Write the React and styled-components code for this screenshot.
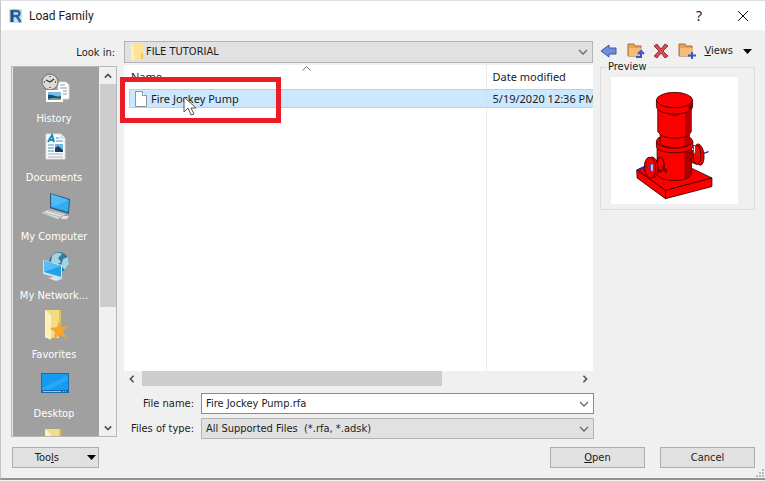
import React from "react";
import styled, { createGlobalStyle } from "styled-components";

const GlobalStyle = createGlobalStyle`
  * { box-sizing: border-box; }
  body { margin: 0; background: #f0f0f0; color: #1c1c1c; font: 11px/14px "DejaVu Sans Condensed", "DejaVu Sans", sans-serif; }
  button, input, select { font: inherit; color: inherit; margin: 0; }
`;

const Dialog = styled.div`
  border-top: 1px solid #dedede;
  border-left: 1px solid #c4c4c4;
  border-bottom: 2px solid #929292;
`;

const TitleBar = styled.header`
  display: flex;
  align-items: center;
  height: 29px;
  padding: 0 6px 0 7px;
  background: #fff;
`;

const Title = styled.h1`
  flex: 1;
  margin: 0 0 0 5px;
  font: 12px/16px Roboto, sans-serif;
`;

const TitleButton = styled.button`
  display: grid;
  place-items: center;
  width: 32px;
  height: 26px;
  margin-left: 12px;
  padding: 0;
  border: 0;
  background: none;
  font: 14px/16px "Noto Sans", sans-serif;
`;

const Body = styled.main`
  display: grid;
  grid-template-columns: 106px minmax(0, 1fr) 155px;
  column-gap: 7px;
  padding: 11px 10px 0 10px;
`;

const Column = styled.div`
  display: flex;
  flex-direction: column;
  min-width: 0;
`;

const LookLabel = styled.label`
  height: 25px;
  padding: 5px 2px 0 0;
  text-align: right;
`;

const Places = styled.nav`
  display: flex;
  height: 371px;
  border: 1px solid #fff;
  border-top-color: #8c8c8c;
  border-left-color: #8c8c8c;
  outline: 1px solid #b8b8b8;
  outline-offset: -1px;
`;

const PlaceList = styled.div`
  flex: 1;
  min-width: 0;
  overflow: hidden;
  border-left: 1px solid #e8e8e8;
  background: #a0a0a0;
`;

const Place = styled.button`
  display: flex;
  flex-direction: column;
  align-items: center;
  gap: 7px;
  width: 100%;
  height: 59px;
  padding: 6px 4px 0 0;
  border: 0;
  background: none;
  color: #fff;
  white-space: nowrap;
  svg { display: block; width: 32px; height: 32px; flex: none; }
`;

const VScroll = styled.div`
  display: flex;
  flex-direction: column;
  width: 17px;
  padding-left: 1px;
  background: #f0f0f0;
`;

const ScrollButton = styled.button`
  display: grid;
  place-items: center;
  flex: none;
  width: 16px;
  height: ${(p) => (p.$row ? 15 : 17)}px;
  padding: 0;
  border: 0;
  background: #f0f0f0;
`;

const VThumb = styled.div`
  height: 223px;
  margin-bottom: auto;
  background: #cdcdcd;
`;

const HScroll = styled.div`
  display: flex;
  background: #f0f0f0;
`;

const HThumb = styled.div`
  width: 64%;
  margin: 0 auto 0 2px;
  background: #cdcdcd;
`;

const Combo = styled.div`
  display: flex;
  align-items: center;
  flex: ${(p) => (p.$tall ? "none" : 1)};
  min-width: 0;
  height: ${(p) => (p.$tall ? 22 : 21)}px;
  padding: 0 4px;
  border: 1px solid ${(p) => (p.$editable ? "#8a8a8a" : "#b4b4b4")};
  background: ${(p) => (p.$editable ? "#fff" : "#e1e1e1")};
  svg { flex: none; }
`;

const comboField = `
  flex: 1;
  min-width: 0;
  height: 18px;
  padding: 0;
  border: 0;
  outline: 0;
  background: none;
  appearance: none;
`;
const Select = styled.select`${comboField}`;
const Input = styled.input`${comboField}`;

const DropButton = styled.button`
  display: grid;
  place-items: center;
  width: 10px;
  height: 16px;
  padding: 0;
  border: 0;
  background: none;
`;

const FilePane = styled.div`
  position: relative;
  height: 306px;
  margin-top: 2px;
  padding-left: 5px;
  background: #fff;
`;

const FileClip = styled.div`
  height: 100%;
  overflow: hidden;
`;

const FileTable = styled.table`
  width: 100%;
  height: 100%;
  table-layout: fixed;
  border-collapse: collapse;
  font: 11px/16px "Noto Sans", sans-serif;
  col:last-child { width: 107px; }
  th, td { padding: 0 0 0 6px; white-space: nowrap; text-align: left; font-weight: 400; }
  th { height: 24px; padding-left: 2px; }
  tr > :last-child { border-left: 1px solid #ececec; padding-left: 6px; }
`;

const FileRow = styled.tr`
  height: 19px;
  background: #cce8ff;
  box-shadow: inset 0 1px #a5d6fb, inset 0 -1px #a5d6fb, inset 1px 0 #a5d6fb;
  td:last-child { border-left-color: #c2e0f8; }
`;

const FileName = styled.span`
  display: flex;
  align-items: center;
  gap: 4px;
`;

const SortMark = styled.svg`
  position: absolute;
  top: 1px;
  left: 178px;
`;

const Highlight = styled.div`
  position: absolute;
  top: 12px;
  left: -4px;
  width: 161px;
  height: 46px;
  border: 5px solid #ec1c24;
`;

const Pointer = styled.svg`
  position: absolute;
  top: 31px;
  left: 59px;
`;

const Field = styled.div`
  display: flex;
  align-items: center;
  margin-top: ${(p) => (p.$first ? 7 : 4)}px;
  margin-right: -1px;
  label { width: 70px; margin-right: 7px; text-align: right; }
`;

const Toolbar = styled.div`
  display: flex;
  align-items: center;
  justify-content: space-between;
  height: 20px;
  padding-right: 3px;
`;

const ToolButton = styled.button`
  display: flex;
  align-items: center;
  gap: 10px;
  padding: 0;
  border: 0;
  background: none;
`;

const Preview = styled.fieldset`
  min-width: 0;
  height: 149px;
  margin: 0;
  padding: 4px 0 0 10px;
  border: 1px solid #dcdcdc;
  legend { margin-left: -5px; padding: 0 2px; line-height: 12px; }
  svg { display: block; background: #fff; }
`;

const Footer = styled.footer`
  display: flex;
  gap: 15px;
  padding: 8px 10px 10px 11px;
`;

const PushButton = styled.button`
  display: flex;
  align-items: center;
  justify-content: center;
  width: ${(p) => (p.$menu ? 87 : 95)}px;
  height: 21px;
  padding: 0;
  border: 1px solid #adadad;
  background: #e1e1e1;
  gap: 28px;
  ${(p) => p.$menu && "margin-right: auto; justify-content: flex-end; padding-right: 2px;"}
`;

const Resize = styled.svg`
  position: absolute;
  right: 0;
  bottom: 0;
`;

const FooterWrap = styled.div`
  position: relative;
`;

function Chevron({ dir = "down", color = "#505050", w = 2, size = 8 }) {
  const d = { down: "M1 3 5 7 9 3", up: "M1 7 5 3 9 7", left: "M7 1 3 5 7 9", right: "M3 1 7 5 3 9" }[dir];
  return (
    <svg width={size} height={size} viewBox="0 0 10 10" fill="none" stroke={color} strokeWidth={w} aria-hidden="true"><path d={d} /></svg>
  );
}

const ComboChevron = () => <Chevron w={1.3} size={10} color="#666" />;

const Triangle = () => (
  <svg width="9" height="5" viewBox="0 0 9 5" aria-hidden="true"><path d="M0 0h9L4.5 5z" fill="#000" /></svg>
);

const FolderShape = () => (
  <>
    <path d="M5 1h14v28H5z" fill="#f4dc85" />
    <path d="M5 1l6 5v25l-6-3z" fill="#fff0b5" />
    <path d="M19 1h2v16h-2z" fill="#e1c15b" />
  </>
);

const HistoryIcon = () => (
  <svg viewBox="0 0 32 32">
    <path d="M20 9h8l3 3v14H20z" fill="#fff" stroke="#d5dadd" />
    <path d="M22 12h5M22 15h7M22 18h7M22 21h7" stroke="#8b9aa3" />
    <circle cx="12" cy="9" r="8" fill="#dcdcd4" stroke="#80807a" strokeWidth="1.3" />
    <path d="M12 3v1M12 14v1M6 9h1M17 9h1M8 7l4 2 4-3" stroke="#333" strokeWidth="1.3" fill="none" />
    <path d="M8 17h17v12H8z" fill="#fff" />
    <path d="M10 19h13v8H10z" fill="#79bce8" />
    <path d="M10 22c5-1 8 3 13 1v4H10z" fill="#174a78" />
    <path d="M10 26c5-2 9 0 13-1v2H10z" fill="#68a875" />
  </svg>
);

const DocumentIcon = () => (
  <svg viewBox="0 0 32 32">
    <path d="M8 2h15l4 4v21H8z" fill="#fafcfc" stroke="#d8dee2" />
    <path d="M22 2v5h5" fill="#ddd" />
    <path d="M10 10l4-7 2 7M11 8h5" fill="none" stroke="#2488bd" strokeWidth="2" />
    <path d="M18 6h3M18 9h7M10 13h6M10 16h6M10 19h6" stroke="#4196c5" />
    <path d="M10 22h15M10 25h15" stroke="#a6adb1" />
    <path d="M17 12h8v8h-8z" fill="#74b6dd" /><path d="M17 16l3-2 5 4v2h-8z" fill="#153e62" />
  </svg>
);

const ComputerIcon = () => (
  <svg viewBox="0 0 32 32">
    <path d="M19 20l4 1v5h-5z" fill="#8aa1af" />
    <path d="M12 2l20 6-1 15-19-6z" fill="#315a78" />
    <path d="M13 3l18 6-1 12-17-5z" fill="#31acf5" /><path d="M13 3l18 6-17 7z" fill="#67c5fa" opacity=".6" />
    <path d="M4 22l6-3 17 4-7 5z" fill="#e2e5e8" stroke="#babdc0" /><path d="M7 22l15 4M10 20l14 4" stroke="#b2b8bd" />
    <path d="M25 25h6l-2 3h-6z" fill="#dfe2e4" />
  </svg>
);

const NetworkIcon = () => (
  <svg viewBox="0 0 32 32">
    <circle cx="21" cy="12" r="10" fill="#337b9e" />
    <path d="M14 6c4-5 8-3 10-2l-4 4 3 4-5 3-5-3zM25 9l5-2 1 7-4 6-4-4z" fill="#a5d4df" />
    <path d="M5 10l19 5v14L5 24z" fill="#d1e1e8" />
    <path d="M6 11l17 5v11L6 22z" fill="#249fea" /><path d="M6 11l17 5L6 22z" fill="#55bdfa" />
    <path d="M15 26l5 1v3l-5-1zM10 28l6-1 8 2-6 2z" fill="#dce4e8" />
  </svg>
);

const FavoriteIcon = () => (
  <svg viewBox="0 0 32 32">
    <g transform="translate(2)"><FolderShape /></g>
    <path d="M21 12l2 6 7-1-5 5 3 7-6-3-6 4 1-7-5-4 7-1z" fill="#f5a72c" />
  </svg>
);

const DesktopIcon = () => (
  <svg viewBox="0 0 32 32">
    <path d="M3 5h28v20H3z" fill="#176bab" /><path d="M4 6h26v16H4z" fill="#159bf2" />
    <path d="M4 20L30 7v5L10 22H4z" fill="#40b2fa" opacity=".5" />
    <path d="M5 23.5h18M25 23.5h1M27 23.5h1" stroke="#86c9ef" />
  </svg>
);

const FolderIcon = () => <svg viewBox="0 0 32 32"><g transform="translate(2 1)"><FolderShape /></g></svg>;

const places = [
  ["History", HistoryIcon], ["Documents", DocumentIcon], ["My Computer", ComputerIcon],
  ["My Network...", NetworkIcon], ["Favorites", FavoriteIcon], ["Desktop", DesktopIcon],
];

const ToolbarFolder = ({ children }) => (
  <svg width="18" height="18" viewBox="0 0 18 18" aria-hidden="true">
    <path d="M1 14V2h6l1 2h6v10z" fill="#e7a353" stroke="#a36f40" />
    <path d="M2 14V6h13v8z" fill="#f5bd76" />
    {children}
  </svg>
);

const PumpDrawing = () => (
  <svg width="127" height="127" viewBox="35 22 380 380" role="img" aria-label="Fire jockey pump">
    <g fill="#fc0000" stroke="#310000" strokeWidth="2.5" strokeLinejoin="round">
      <path d="M112 300L200 259 337 324V350L198 386 113 324z" />
      <path d="M113 300L198 361 337 324M198 361V386" fill="none" stroke="#180000" />
      <path d="M270 247l18-10v45l-18-7z" />
      <ellipse cx="299" cy="254" rx="14" ry="32" transform="rotate(-7 299 254)" />
      <ellipse cx="292" cy="255" rx="12" ry="29" />
      <path d="M173 224V310c2 29 101 29 103 0V224z" />
      <path d="M255 244h21v72c-6 6-13 9-21 11z" fill="#a90000" stroke="none" />
      <path d="M171 214v16c4 25 106 25 109 0v-16z" />
      <ellipse cx="225" cy="214" rx="54" ry="21" />
      <path d="M182 185v35c8 18 81 18 87 0v-35z" />
      <path d="M255 197h14v24c-4 5-9 7-14 8z" fill="#bd0000" stroke="none" />
      <path d="M175 112v74l8 8c10 15 76 15 86 0l6-8v-74z" />
      <path d="M257 126h18v60l-6 8-12 6z" fill="#bd0000" stroke="none" />
      <path d="M171 91v20c5 29 105 29 108 0V91z" />
      <path d="M267 108l11-7v12l-11 9z" fill="#8e0000" stroke="none" />
      <ellipse cx="225" cy="91" rx="54" ry="23" />
      <path d="M210 131c3 8 27 8 31 0" fill="none" />
      <path d="M166 280l14-15c18 3 20 36 5 42l-19-9z" />
      <ellipse cx="183" cy="282" rx="10" ry="20" />
      <ellipse cx="160" cy="292" rx="16" ry="31" transform="rotate(-6 160 292)" />
      <ellipse cx="152" cy="293" rx="17" ry="31" transform="rotate(-5 152 293)" />
      <path d="M188 290l12 17M200 295v12" />
    </g>
    <path d="M115 301l30-10M310 251l17-6" stroke="#2727bd" strokeWidth="4" />
    <path d="M154 282h7v22h-7zM282 227h6v23h-6z" fill="#fff" stroke="#4b3fae" strokeWidth="3" />
    <path d="M145 292h5M294 255h8" stroke="#3b6a26" strokeWidth="4" />
  </svg>
);

export default function App() {
  return (
    <>
      <GlobalStyle />
      <Dialog role="dialog" aria-labelledby="title">
        <TitleBar>
          <svg width="16" height="16" viewBox="0 0 16 16" aria-hidden="true">
            <path d="M1 1h13v14H1z" fill="#c8dcf0" />
            <path d="M4 2v12" stroke="#1c4f85" strokeWidth="3" />
            <path d="M5 3h3.5c4 0 4 5 0 5H5M8.5 8l4 6" fill="none" stroke="#2a62a0" strokeWidth="2.3" />
          </svg>
          <Title id="title">Load Family</Title>
          <TitleButton aria-label="Help">?</TitleButton>
          <TitleButton aria-label="Close">
            <svg width="12" height="12" viewBox="0 0 12 12" stroke="#111" aria-hidden="true"><path d="M1 1l10 10M11 1L1 11" /></svg>
          </TitleButton>
        </TitleBar>

        <Body>
          <Column>
            <LookLabel htmlFor="look-in">Look in:</LookLabel>
            <Places aria-label="Places">
              <PlaceList>
                {places.map(([label, Icon]) => <Place key={label}><Icon />{label}</Place>)}
                <Place aria-label="Folder"><FolderIcon /></Place>
              </PlaceList>
              <VScroll>
                <ScrollButton aria-label="Scroll up"><Chevron dir="up" /></ScrollButton>
                <VThumb />
                <ScrollButton aria-label="Scroll down"><Chevron /></ScrollButton>
              </VScroll>
            </Places>
          </Column>

          <Column>
            <Combo $tall>
              <svg width="17" height="18" viewBox="0 0 17 18" aria-hidden="true">
                <path d="M2 1h12v15H2z" fill="#ffe391" /><path d="M2 1l3 2v14l-3-1z" fill="#fff0b5" /><path d="M12 10h2v6h-2z" fill="#eec75e" />
              </svg>
              <Select id="look-in"><option>FILE TUTORIAL</option></Select>
              <ComboChevron />
            </Combo>
            <FilePane>
              <FileClip>
                <FileTable>
                  <colgroup><col /><col /></colgroup>
                  <thead><tr><th scope="col">Name</th><th scope="col">Date modified</th></tr></thead>
                  <tbody>
                    <FileRow>
                      <td>
                        <FileName>
                          <svg width="12" height="16" viewBox="0 0 12 16" fill="#fff" stroke="#8c969d" aria-hidden="true"><path d="M.5.5h7l4 4v11H.5z" /><path d="M7.5.5v4h4" /></svg>
                          Fire Jockey Pump
                        </FileName>
                      </td>
                      <td>5/19/2020 12:36 PM</td>
                    </FileRow>
                    <tr><td /><td /></tr>
                  </tbody>
                </FileTable>
              </FileClip>
              <SortMark width="9" height="5" viewBox="0 0 9 5" fill="none" stroke="#777" aria-hidden="true"><path d="M.5 4.5l4-4 4 4" /></SortMark>
              <Highlight />
              <Pointer width="14" height="20" viewBox="0 0 14 20" aria-hidden="true">
                <path d="M1 1v15l4-4 3 7 3-1-3-6h5z" fill="#fff" stroke="#555" />
              </Pointer>
            </FilePane>
            <HScroll>
              <ScrollButton $row aria-label="Scroll left"><Chevron dir="left" /></ScrollButton>
              <HThumb />
              <ScrollButton $row aria-label="Scroll right"><Chevron dir="right" /></ScrollButton>
            </HScroll>
            <Field $first>
              <label htmlFor="file-name">File name:</label>
              <Combo $editable>
                <Input id="file-name" defaultValue="Fire Jockey Pump.rfa" />
                <DropButton aria-label="Recent names"><ComboChevron /></DropButton>
              </Combo>
            </Field>
            <Field>
              <label htmlFor="file-type">Files of type:</label>
              <Combo>
                <Select id="file-type"><option>All Supported Files {"\u00a0"}(*.rfa, *.adsk)</option></Select>
                <ComboChevron />
              </Combo>
            </Field>
          </Column>

          <Column>
            <Toolbar>
              <ToolButton aria-label="Back">
                <svg width="18" height="16" viewBox="0 0 18 16" aria-hidden="true"><path d="M1 8l8-6v3h7v6H9v3z" fill="#6e8fdf" stroke="#4055a0" /></svg>
              </ToolButton>
              <ToolButton aria-label="Up one level">
                <ToolbarFolder><path d="M9 15h5v-4M11 12l3-3 3 3" fill="none" stroke="#345bc3" strokeWidth="2" /></ToolbarFolder>
              </ToolButton>
              <ToolButton aria-label="Delete">
                <svg width="16" height="16" viewBox="0 0 16 16" aria-hidden="true"><path d="M1 3l3-2 4 5 4-5 3 2-5 5 5 5-3 2-4-5-4 5-3-2 5-5z" fill="#d34c59" stroke="#9a343d" /></svg>
              </ToolButton>
              <ToolButton aria-label="New folder">
                <ToolbarFolder><path d="M14 10v7M10 13.5h8" stroke="#345bc3" strokeWidth="2" /></ToolbarFolder>
              </ToolButton>
              <ToolButton><span><u>V</u>iews</span><Triangle /></ToolButton>
            </Toolbar>
            <Preview>
              <legend>Preview</legend>
              <PumpDrawing />
            </Preview>
          </Column>
        </Body>

        <FooterWrap>
          <Footer>
            <PushButton $menu><span>Too<u>l</u>s</span><Triangle /></PushButton>
            <PushButton><span><u>O</u>pen</span></PushButton>
            <PushButton>Cancel</PushButton>
          </Footer>
          <Resize width="9" height="9" viewBox="0 0 9 9" fill="#bababa" aria-hidden="true">
            <path d="M6 0h2v2H6zM3 3h2v2H3zM6 3h2v2H6zM0 6h2v2H0zM3 6h2v2H3zM6 6h2v2H6z" />
          </Resize>
        </FooterWrap>
      </Dialog>
    </>
  );
}
